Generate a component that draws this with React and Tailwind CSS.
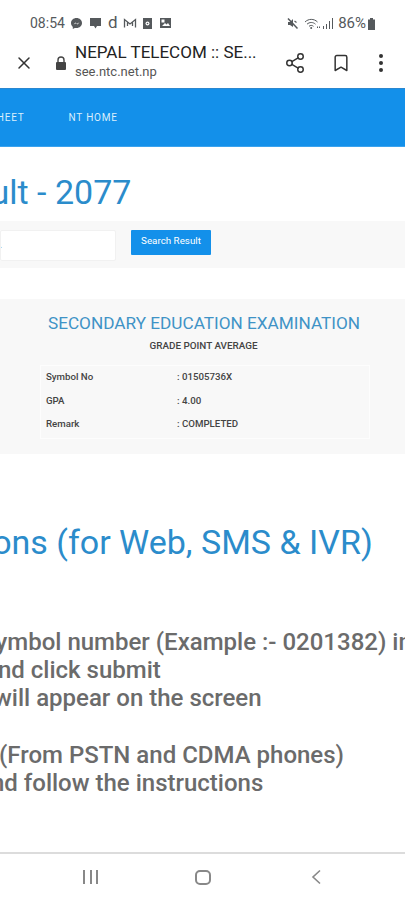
import React from 'react';
import { X, Share2, Bookmark } from 'lucide-react';

const font = { fontFamily: 'Roboto, sans-serif' };

// small notification glyphs in the status bar
const StatusIcons = () => (
    <div className="flex items-center gap-[5px] ml-[5px] text-[#55595c]">
        <svg width="13" height="13" viewBox="0 0 13 13">
            <path d="M6.5 1C3.3 1 1 3.2 1 6.1c0 1.6.7 2.9 1.8 3.8V12l2-1.1c.5.2 1.1.2 1.7.2 3.2 0 5.5-2.2 5.5-5S9.700 1 6.500 1z" fill="currentColor" />
            <path d="M3.500 7.500l2-2 1.500 1.200 2.500-1.500-2 2.200-1.500-1.200z" fill="#fff" />
        </svg>
        <svg width="13" height="13" viewBox="0 0 13 13" className="ml-[1px]">
            <path d="M1 1h11v8H8l-1.500 2.500L5 9H1z" fill="currentColor" />
        </svg>
        <span className="text-[17px] leading-none font-normal ml-[1px] mt-[-2px]">d</span>
        <svg width="14" height="13" viewBox="0 0 14 13" className="ml-[1px]">
            <path d="M1.500 10.500V2.500l5.500 4.500 5.500-4.500v8M4.500 9V5.500M9.500 9V5.500" fill="none" stroke="currentColor" strokeWidth="1.300" />
        </svg>
        <svg width="11" height="13" viewBox="0 0 11 13">
            <path d="M1 1h9v11H1z" fill="currentColor" />
            <circle cx="5.500" cy="6.500" r="2" fill="#fff" />
            <circle cx="5.500" cy="6.500" r="0.800" fill="currentColor" />
        </svg>
        <svg width="13" height="12" viewBox="0 0 13 12" className="ml-[1px]">
            <path d="M1 1h11v10H1z" fill="currentColor" />
            <path d="M2.500 2.500h3v3h-3zM3 9l3-3 1.500 1.500L9 6l2 3z" fill="#fff" />
        </svg>
    </div>
);

const SystemIcons = () => (
    <div className="flex items-center text-[#55595c]">
        <svg width="13" height="13" viewBox="0 0 13 13">
            <path d="M2 5h2l3-3v8L4 8H2z" fill="currentColor" />
            <path d="M2 1.500l9.500 10" stroke="currentColor" strokeWidth="1.500" />
            <path d="M8.500 4l2 1.500" stroke="currentColor" strokeWidth="1.200" />
        </svg>
        <svg width="17" height="13" viewBox="0 0 17 13" className="ml-[5px]">
            <path d="M1 5c3.500-3.500 9-3.500 12.500 0M3 7.200c2.500-2.300 6-2.300 8.500 0M5 9.300c1.500-1.200 3-1.200 4.500 0" fill="none" stroke="currentColor" strokeWidth="1" />
            <circle cx="7.200" cy="11" r="1" fill="currentColor" />
            <path d="M13 9.500h1v1.500h-1zM15 9.500h1v1.500h-1z" fill="currentColor" />
        </svg>
        <svg width="12" height="13" viewBox="0 0 12 13" className="ml-[1px]">
            <path d="M1 9h1v3H1zM4 7h1v5H4zM7 4h1v8H7zM10 1h1v11h-1z" fill="currentColor" />
        </svg>
        <span className="text-[15px] leading-none ml-[4px]">86%</span>
        <svg width="9" height="12" viewBox="0 0 9 12" className="ml-[1px]">
            <path d="M3 0h3v1.500h2V12H1V1.500h2z" fill="currentColor" />
        </svg>
    </div>
);

const Row = ({ label, value }) => (
    <div className="flex h-[23.5px] items-center">
        <div className="w-[136px] pl-[5px] text-[#444]">{label}</div>
        <div className="text-[#444]">: {value}</div>
    </div>
);

const App = () => {
    return (
        <div style={font} className="w-[405px] h-[900px] bg-white overflow-hidden flex flex-col">
            {/* phone status bar */}
            <div className="h-[37px] pt-[16px] pl-[30px] pr-[29px] flex items-start justify-between">
                <div className="flex items-center mt-[-1px]">
                    <span className="text-[14px] leading-[16px] text-[#55595c]">08:54</span>
                    <StatusIcons />
                </div>
                <SystemIcons />
            </div>

            {/* browser toolbar */}
            <div className="h-[51px] flex items-center pl-[14px] pr-[11px]">
                <X className="w-[20px] h-[20px] text-[#333]" strokeWidth={1.800} />
                <svg width="12" height="15" viewBox="0 0 12 15" className="ml-[21px] mt-[1px] text-[#444]">
                    <path d="M3 6V4a3 3 0 0 1 6 0v2" fill="none" stroke="currentColor" strokeWidth="1.400" />
                    <rect x="1" y="6" width="10" height="8" rx="1" fill="currentColor" />
                </svg>
                <div className="ml-[8px] w-[190px] mt-[-2px]">
                    <div className="text-[17px] leading-[19px] text-[#222] whitespace-nowrap">NEPAL TELECOM :: SE...</div>
                    <div className="text-[13px] leading-[17px] text-[#555] mt-[1px]">see.ntc.net.np</div>
                </div>
                <Share2 className="ml-[19px] w-[22px] h-[22px] text-[#333]" strokeWidth={1.600} />
                <Bookmark className="ml-[25px] w-[20px] h-[20px] text-[#333]" strokeWidth={1.800} />
                <div className="ml-[28px] flex flex-col gap-[3px]">
                    <span className="w-[4px] h-[4px] rounded-full bg-[#333]" />
                    <span className="w-[4px] h-[4px] rounded-full bg-[#333]" />
                    <span className="w-[4px] h-[4px] rounded-full bg-[#333]" />
                </div>
            </div>

            {/* site nav */}
            <div className="h-[59px] bg-[#1390ea] border-t border-[#2b87cf] border-b border-b-[#3ba3ee] flex items-center text-[10px] tracking-[0.8px] text-[#d9eefc] font-normal overflow-hidden">
                <span className="ml-[-10px] whitespace-nowrap">SHEET</span>
                <span className="ml-[44px] whitespace-nowrap">NT HOME</span>
            </div>

            <div className="mt-[27px] ml-[-66px] h-[36px] whitespace-nowrap text-[34px] leading-[36px] text-[#2b8ccb]">Result - 2077</div>

            {/* search band */}
            <div className="mt-[11px] h-[47px] bg-[#f8f8f8] flex items-start pt-[9px]">
                <div className="w-[116px] h-[31px] bg-white border border-[#f1f1f1] rounded-[2px] flex items-center overflow-hidden">
                    <span className="ml-[-50px] pb-[2px] text-[10px] text-[#777] whitespace-nowrap">Symbol No.</span>
                </div>
                <button className="ml-[15px] w-[80px] h-[25px] bg-[#1390ea] text-white text-[9.800px] pb-[2px] rounded-[1px]">Search Result</button>
            </div>

            {/* result panel */}
            <div className="mt-[31px] h-[155px] bg-[#f8f8f8] pt-[14px] flex flex-col items-center">
                <div className="text-[17.200px] leading-[20px] text-[#3f93c6] whitespace-nowrap ml-[3px]">SECONDARY EDUCATION EXAMINATION</div>
                <div className="mt-[7px] ml-[2px] text-[9.900px] leading-[11px] font-medium text-[#444]">GRADE POINT AVERAGE</div>
                <div className="mt-[14px] ml-[5px] w-[330px] h-[74px] border border-[#fdfdfd] text-[9.700px] font-medium">
                    <Row label="Symbol No" value="01505736X" />
                    <Row label="GPA" value="4.00" />
                    <Row label="Remark" value="COMPLETED" />
                </div>
            </div>

            <div className="mt-[67px] ml-[-132px] h-[42px] whitespace-nowrap text-[34px] leading-[42px] text-[#2b8ccb]">Instructions (for Web, SMS &amp; IVR)</div>

            {/* instructions */}
            <div className="mt-[65px] text-[24px] leading-[28px] font-medium text-[#6b6b6b] whitespace-nowrap">
                <div className="ml-[-19px]">Symbol number (Example :- 0201382) in</div>
                <div className="ml-[-15px]">and click submit</div>
                <div className="ml-[-6px]">will appear on the screen</div>
                <div className="mt-[29px] ml-[-1px]">(From PSTN and CDMA phones)</div>
                <div className="ml-[-22px]">and follow the instructions</div>
            </div>

            {/* android nav bar */}
            <div className="mt-auto h-[48px] border-t-2 border-[#dcdcdc] flex items-center relative text-[#777]">
                <div className="ml-[83px] flex gap-[4.500px]">
                    <span className="w-[2px] h-[14px] bg-[#888]" />
                    <span className="w-[2px] h-[14px] bg-[#888]" />
                    <span className="w-[2px] h-[14px] bg-[#888]" />
                </div>
                <div className="ml-[97px] w-[16px] h-[15px] rounded-[5px] border-2 border-[#888]" />
                <svg width="10" height="16" viewBox="0 0 10 16" className="ml-[100px]">
                    <path d="M9 1.500L2 8l7 6.500" fill="none" stroke="#888" strokeWidth="1.600" />
                </svg>
            </div>
        </div>
    );
};

export default App;
